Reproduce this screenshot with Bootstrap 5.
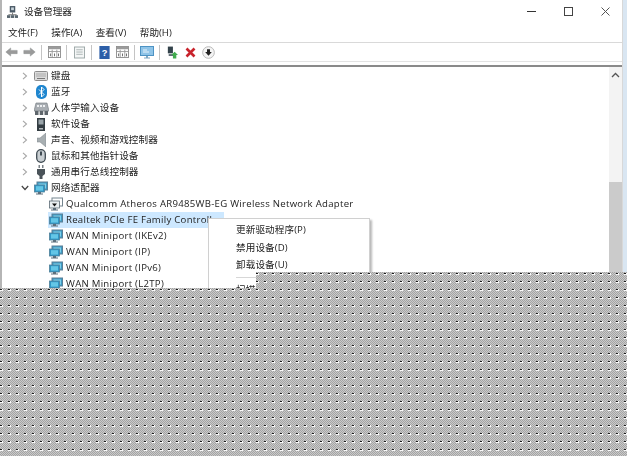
<!DOCTYPE html>
<html lang="zh-CN">
<head>
<meta charset="utf-8">
<title>设备管理器</title>
<link href="https://cdn.jsdelivr.net/npm/bootstrap@5.3.0/dist/css/bootstrap.min.css" rel="stylesheet">
<style>
html,body{height:456px;overflow:hidden;background:#fff}
body{position:relative;width:627px;font-family:"Open Sans","Noto Sans CJK SC",sans-serif;font-size:9.6px;line-height:16px;color:#222}
.win{height:456px;width:623px;border-left:2px solid #b5b5b5;border-right:1px solid #d8d8d8;filter:blur(.35px)}
.edge{width:4px;height:456px;background:#d9e6f2;position:absolute;top:0;right:0}
.titlebar{height:23px;padding-left:5px;gap:6px}
.caps{margin-left:auto;margin-right:-2px}
.cap{width:37px;height:23px;display:flex;align-items:center;justify-content:center}
.menubar{height:20px;padding-left:6px;gap:13.5px;border-bottom:1px solid #d9d9d9}
.tools{height:19px;border-bottom:1px solid #e3e3e3}
.tgap{height:5px;border-bottom:2px solid #8a8a8a}
.tool{width:18px;height:16px;display:flex;align-items:center;justify-content:center;flex:none}
.sep{width:1px;height:15px;background:#c4c4c4;margin:0 3px;flex:none}
.tree{height:389px}
.rows{min-width:0;padding-top:1px}
.node{height:16px;white-space:nowrap;letter-spacing:.14px}
.lv1{padding-left:18px}
.lv2{padding-left:46px;letter-spacing:.28px}
.chev{width:10px;flex:none;display:flex;justify-content:center;margin-right:3px}
.ico{width:16px;height:16px;flex:none;margin-right:2px;display:flex;align-items:center;justify-content:center}
.picked{background:#cde8ff;width:176px}
.scroll{width:13px;background:#f3f3f3;flex:none}
.arrow{height:16px;display:flex;align-items:center;justify-content:center}
.spacer{height:99px}
.thumb{height:290px;background:#cbcbcb}
.popup{position:absolute;left:208px;top:218px;width:162px;height:80px;background:#fff;border:1px solid #d0d0d0;box-shadow:2px 2px 2px rgba(0,0,0,.28);padding:2px 0;filter:blur(.35px)}
.pick{padding-left:27px;height:17.6px;line-height:17.6px;letter-spacing:.1px}
.rule{height:1px;background:#d7d7d7;margin:3px 0 3px 27px}
.mask{position:absolute;left:0;top:0;width:627px;height:456px}
</style>
</head>
<body>
<svg width="0" height="0" class="position-absolute">
<defs>
<symbol id="net" viewBox="0 0 14 14">
<rect x="3" y="1" width="10.5" height="8" fill="#3f9bc4" stroke="#5b7f96"/>
<rect x="4.5" y="2.5" width="7.5" height="5" fill="#7fd0ea"/>
<rect x=".5" y="4" width="10" height="7" fill="#2f97c6" stroke="#4f7f9a" stroke-width=".8"/>
<rect x="2" y="5.2" width="7" height="4.4" fill="#64c6e6"/>
<path d="M4 11h3v1.5h2v1H2v-1h2z" fill="#5d6f7c"/>
</symbol>
<symbol id="back" viewBox="0 0 16 12"><path d="M1 6l6-5v3h8v4H7v3z" fill="#9a9a9a" stroke="#8a8f8f" stroke-width=".6"/></symbol>
<symbol id="fwd" viewBox="0 0 16 12"><path d="M15 6L9 1v3H1v4h8v3z" fill="#9a9a9a" stroke="#8a8f8f" stroke-width=".6"/></symbol>
<symbol id="panel" viewBox="0 0 14 13"><rect x=".5" y=".5" width="13" height="12" fill="#fff" stroke="#8e8e8e"/><rect x="1" y="1" width="12" height="2.5" fill="#9b9b9b"/><path d="M4.5 4v8M9.5 4v8M1 6h12" stroke="#9b9b9b" fill="none"/><path d="M2.3 8h1v3h-1zM6.5 8h1v3h-1zM10.8 8h1v3h-1z" fill="#666"/></symbol>
<symbol id="chev-r" viewBox="0 0 6 8"><path d="M1 .8L4.5 4 1 7.2" fill="none" stroke="#a6a6a6" stroke-width="1.1"/></symbol>
<symbol id="chev-d" viewBox="0 0 8 6"><path d="M.8 1L4 4.5 7.2 1" fill="none" stroke="#444" stroke-width="1.2"/></symbol>
</defs>
</svg>

<div class="win d-flex flex-column">
  <div class="titlebar d-flex align-items-center">
    <svg width="11" height="12" viewBox="0 0 12 13"><rect x="3" y="0" width="6" height="7" fill="#4b5a66"/><rect x="4.5" y="1.5" width="3" height="3" fill="#c7d3db"/><path d="M5.5 7h1v2h-1zM1.5 9h9v1h-9z" fill="#777"/><rect x="0" y="10" width="3.5" height="3" fill="#59666f"/><rect x="4.2" y="10" width="3.5" height="3" fill="#59666f"/><rect x="8.5" y="10" width="3.5" height="3" fill="#59666f"/></svg>
    <span>设备管理器</span>
    <div class="caps d-flex">
      <div class="cap"><svg width="9" height="9" viewBox="0 0 9 9"><path d="M0 4.5h9" stroke="#333"/></svg></div>
      <div class="cap"><svg width="9" height="9" viewBox="0 0 9 9"><rect x=".5" y=".5" width="8" height="8" fill="none" stroke="#444"/></svg></div>
      <div class="cap"><svg width="9" height="9" viewBox="0 0 9 9"><path d="M.5.5l8 8M8.5.5l-8 8" stroke="#555"/></svg></div>
    </div>
  </div>
  <div class="menubar d-flex align-items-center"><span>文件(F)</span><span>操作(A)</span><span>查看(V)</span><span>帮助(H)</span></div>
  <div class="tools d-flex align-items-center">
    <div class="tool"><svg width="13" height="10"><use href="#back"/></svg></div>
    <div class="tool"><svg width="13" height="10"><use href="#fwd"/></svg></div>
    <div class="sep"></div>
    <div class="tool"><svg width="13" height="12"><use href="#panel"/></svg></div>
    <div class="sep"></div>
    <div class="tool"><svg width="11" height="13" viewBox="0 0 12 13"><rect x=".5" y=".5" width="11" height="12" fill="#f4f6f6" stroke="#9aa5a5"/><path d="M2.5 3.5h7M2.5 6h7M2.5 8.5h7" stroke="#a8b2b2"/></svg></div>
    <div class="sep"></div>
    <div class="tool"><svg width="11" height="13" viewBox="0 0 11 14"><rect width="11" height="14" fill="#2d5fa8"/><text x="5.5" y="11" font-size="10" font-weight="700" fill="#fff" text-anchor="middle" font-family="Liberation Sans">?</text></svg></div>
    <div class="tool"><svg width="13" height="12"><use href="#panel"/></svg></div>
    <div class="sep"></div>
    <div class="tool"><svg width="14" height="13" viewBox="0 0 14 13"><rect x=".5" y=".5" width="13" height="9" fill="#8fc4e8" stroke="#4d93c4"/><path d="M3 4h4M3 6h6" stroke="#e6f3fb"/><path d="M6 10h2v1.5h2v1H4v-1h2z" fill="#7fa8c4"/></svg></div>
    <div class="sep"></div>
    <div class="tool"><svg width="11" height="13" viewBox="0 0 13 14"><rect x="1" y="0" width="6" height="8" fill="#33424b"/><path d="M2 9h6v2H2z" fill="#4b5a63"/><path d="M9 6l4 4h-2v4H7v-4H5z" fill="#41ab4f"/></svg></div>
    <div class="tool"><svg width="11" height="11" viewBox="0 0 11 11"><path d="M1.5 1.5l8 8M9.5 1.5l-8 8" stroke="#c8232c" stroke-width="2.6"/></svg></div>
    <div class="tool"><svg width="13" height="13" viewBox="0 0 14 14"><circle cx="7" cy="7" r="6.3" fill="#f4f4f4" stroke="#b5b5b5"/><path d="M5.4 3.5h3.2v3h2L7 10.6 3.4 6.5h2z" fill="#222"/></svg></div>
  </div>
  <div class="tgap"></div>
  <div class="tree d-flex">
    <ul class="rows list-unstyled m-0 flex-grow-1">
      <li class="node lv1 d-flex align-items-center"><span class="chev"><svg width="6" height="8"><use href="#chev-r"/></svg></span><span class="ico"><svg width="14" height="10" viewBox="0 0 14 10"><rect x=".5" y=".5" width="13" height="9" rx="1" fill="#dcdcdc" stroke="#8d8d8d"/><path d="M2 3h10M2 5h10" stroke="#aaa"/><path d="M3 7.5h8" stroke="#777"/></svg></span><span>键盘</span></li>
      <li class="node lv1 d-flex align-items-center"><span class="chev"><svg width="6" height="8"><use href="#chev-r"/></svg></span><span class="ico"><svg width="11" height="14" viewBox="0 0 11 14"><rect width="11" height="14" rx="5" fill="#1f86cf"/><path d="M3 4.5l5 5-2.5 2.5V2L8 4.5l-5 5" fill="none" stroke="#fff"/></svg></span><span>蓝牙</span></li>
      <li class="node lv1 d-flex align-items-center"><span class="chev"><svg width="6" height="8"><use href="#chev-r"/></svg></span><span class="ico"><svg width="15" height="13" viewBox="0 0 15 13"><path d="M2 1h11l2 8H0z" fill="#a9aeb3" stroke="#6f767c" stroke-width=".6"/><path d="M3 3h2v2H3zM6 3h2v2H6zM9 3h2v2H9z" fill="#eef0f2"/><rect x="1" y="9" width="3.5" height="4" fill="#5f666c"/><rect x="5.7" y="9" width="3.5" height="4" fill="#5f666c"/><rect x="10.5" y="9" width="3.5" height="4" fill="#5f666c"/></svg></span><span>人体学输入设备</span></li>
      <li class="node lv1 d-flex align-items-center"><span class="chev"><svg width="6" height="8"><use href="#chev-r"/></svg></span><span class="ico"><svg width="8" height="13" viewBox="0 0 8 13"><rect width="8" height="13" fill="#333c42"/><rect x="1.5" y="1.5" width="5" height="5" fill="#9aa4a9"/><rect x="2" y="10" width="4" height="1.5" fill="#b3b8bb"/></svg></span><span>软件设备</span></li>
      <li class="node lv1 d-flex align-items-center"><span class="chev"><svg width="6" height="8"><use href="#chev-r"/></svg></span><span class="ico"><svg width="9" height="14" viewBox="0 0 9 14"><path d="M0 5h3l6-5v14l-6-5H0z" fill="#a8afb2" stroke="#7d8589" stroke-width=".5"/></svg></span><span>声音、视频和游戏控制器</span></li>
      <li class="node lv1 d-flex align-items-center"><span class="chev"><svg width="6" height="8"><use href="#chev-r"/></svg></span><span class="ico"><svg width="10" height="14" viewBox="0 0 10 14"><rect x=".7" y=".7" width="8.6" height="12.6" rx="4.2" fill="#c9cfd3" stroke="#3f4a52" stroke-width="1.3"/><rect x="4" y="2.5" width="2" height="4" fill="#3f4a52"/></svg></span><span>鼠标和其他指针设备</span></li>
      <li class="node lv1 d-flex align-items-center"><span class="chev"><svg width="6" height="8"><use href="#chev-r"/></svg></span><span class="ico"><svg width="8" height="14" viewBox="0 0 8 14"><path d="M1.5 0h1.5v3H1.5zM5 0h1.5v3H5z" fill="#7b8287"/><path d="M0 4h8v5L5.5 11v3h-3v-3L0 9z" fill="#4a5359"/></svg></span><span>通用串行总线控制器</span></li>
      <li class="node lv1 d-flex align-items-center"><span class="chev"><svg width="8" height="6"><use href="#chev-d"/></svg></span><span class="ico"><svg width="14" height="14"><use href="#net"/></svg></span><span>网络适配器</span></li>
      <li class="node lv2 d-flex align-items-center"><span class="ico"><svg width="14" height="14" viewBox="0 0 14 14"><rect x="3" y="1" width="10.5" height="8" fill="#fff" stroke="#75858f"/><rect x=".5" y="4" width="10" height="7" fill="#e8eef1" stroke="#5c6c76" stroke-width=".8"/><path d="M3 6.5h5L5.5 9.5z" fill="#111"/><path d="M4 11h3v1.5h2v1H2v-1h2z" fill="#5d6f7c"/></svg></span><span>Qualcomm Atheros AR9485WB-EG Wireless Network Adapter</span></li>
      <li class="node lv2 d-flex align-items-center"><div class="picked d-flex align-items-center"><span class="ico"><svg width="14" height="14"><use href="#net"/></svg></span><span>Realtek PCIe FE Family Controller</span></div></li>
      <li class="node lv2 d-flex align-items-center"><span class="ico"><svg width="14" height="14"><use href="#net"/></svg></span><span>WAN Miniport (IKEv2)</span></li>
      <li class="node lv2 d-flex align-items-center"><span class="ico"><svg width="14" height="14"><use href="#net"/></svg></span><span>WAN Miniport (IP)</span></li>
      <li class="node lv2 d-flex align-items-center"><span class="ico"><svg width="14" height="14"><use href="#net"/></svg></span><span>WAN Miniport (IPv6)</span></li>
      <li class="node lv2 d-flex align-items-center"><span class="ico"><svg width="14" height="14"><use href="#net"/></svg></span><span>WAN Miniport (L2TP)</span></li>
    </ul>
    <div class="scroll">
      <div class="arrow"><svg width="9" height="6" viewBox="0 0 9 6"><path d="M1 5l3.5-3.5L8 5" fill="none" stroke="#555" stroke-width="1.3"/></svg></div>
      <div class="spacer"></div>
      <div class="thumb"></div>
    </div>
  </div>
</div>
<div class="edge"></div>

<div class="popup">
  <div class="pick">更新驱动程序(P)</div>
  <div class="pick">禁用设备(D)</div>
  <div class="pick">卸载设备(U)</div>
  <div class="rule"></div>
  <div class="pick">扫描检测硬件改动(A)</div>
</div>

<svg class="mask" viewBox="0 0 627 456" shape-rendering="crispEdges">
  <defs>
    <pattern id="dither" width="8" height="8" patternUnits="userSpaceOnUse">
      <rect width="8" height="8" fill="#cacaca"/>
      <path d="M0 0h1v1H0zM2 0h1v1H2zM4 0h1v1H4zM6 0h1v1H6zM1 1h1v1H1zM3 1h1v1H3zM5 1h1v1H5zM7 1h1v1H7zM0 2h1v1H0zM2 2h1v1H2zM4 2h1v1H4zM6 2h1v1H6zM1 3h1v1H1zM3 3h1v1H3zM5 3h1v1H5zM7 3h1v1H7zM0 4h1v1H0zM2 4h1v1H2zM4 4h1v1H4zM6 4h1v1H6zM1 5h1v1H1zM3 5h1v1H3zM5 5h1v1H5zM7 5h1v1H7zM0 6h1v1H0zM2 6h1v1H2zM4 6h1v1H4zM6 6h1v1H6zM1 7h1v1H1zM3 7h1v1H3zM5 7h1v1H5zM7 7h1v1H7z" fill="#a4a4a4"/>
      <path d="M0 1h2v1H0z" fill="#1a1a1a"/>
      <path d="M2 1h1v1H2zM0 2h3v1H0z" fill="#fafafa"/>
    </pattern>
  </defs>
  <path d="M256 272H627V456H0V288H256Z" fill="url(#dither)"/>
</svg>
<script src="https://cdn.jsdelivr.net/npm/bootstrap@5.3.0/dist/js/bootstrap.bundle.min.js"></script>
</body>
</html>
